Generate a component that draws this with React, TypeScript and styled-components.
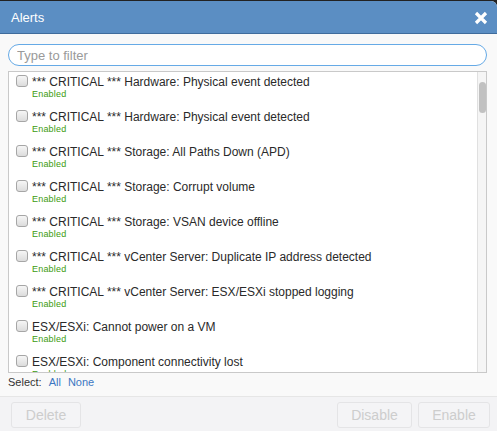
import React from "react";
import styled, { createGlobalStyle } from "styled-components";

const Global = createGlobalStyle`
  html, body { margin: 0; padding: 0; background: #222; }
  body { font-family: Arial, "Liberation Sans", sans-serif; width: 497px; height: 431px; overflow: hidden; }
  * { box-sizing: border-box; }
`;

const Dialog = styled.div`
  margin-top: 1px;
  width: 497px;
  height: 430px;
  display: flex;
  flex-direction: column;
  background: #f9f9f9;
  border-top-right-radius: 6px;
  overflow: hidden;
`;

const Header = styled.div`
  height: 33px;
  flex: none;
  display: flex;
  align-items: center;
  justify-content: space-between;
  padding: 0 8px 0 11px;
  background: #5b8ec3;
  border-bottom: 1px solid #3f6c9c;
  color: #fff;
`;

const Title = styled.div`
  font-size: 13px;
  line-height: 16px;
  padding-top: 1px;
`;

const Close = styled.div`
  width: 16px;
  height: 16px;
  display: flex;
  align-items: center;
  justify-content: center;
  margin-top: 1px;
`;

const Body = styled.div`
  flex: none;
  padding: 10px 10px 0 8px;
  display: flex;
  flex-direction: column;
`;

const Filter = styled.input`
  height: 22px;
  width: 479px;
  border: 1px solid #66aae6;
  border-radius: 11px;
  background: #fff;
  padding: 0 0 0 8px;
  font-family: Arial, "Liberation Sans", sans-serif;
  font-size: 13px;
  color: #333;
  outline: none;
  &::placeholder { color: #9a9a9a; }
`;

const List = styled.div`
  position: relative;
  margin-top: 5px;
  width: 479px;
  height: 302px;
  border: 1px solid #c9c9c9;
  background: #fff;
  overflow: hidden;
`;

const Scrollbar = styled.div`
  position: absolute;
  top: 0;
  right: 0;
  bottom: 0;
  width: 9px;
  background: #f5f5f5;
  border-left: 1px solid #e0e0e0;
  padding: 10px 0 0 1px;
`;

const Thumb = styled.div`
  width: 7px;
  height: 31px;
  border-radius: 4px;
  background: #c1c1c1;
`;

const Row = styled.label`
  display: flex;
  align-items: flex-start;
  height: 35px;
  padding: 3px 0 0 7px;
  overflow: hidden;
`;

const Check = styled.input`
  appearance: none;
  -webkit-appearance: none;
  width: 12px;
  height: 12px;
  margin: 0 4px 0 0;
  flex: none;
  border: 1px solid #a6a6a6;
  border-radius: 3px;
  background: linear-gradient(#f6f6f6, #dcdcdc);
`;

const Texts = styled.div`
  display: flex;
  flex-direction: column;
  padding-top: 1px;
`;

const Name = styled.div`
  font-size: 12px;
  line-height: 13px;
  color: #2a2a2a;
  white-space: nowrap;
`;

const Status = styled.div`
  font-size: 9px;
  line-height: 10px;
  letter-spacing: 0.2px;
  color: #3c9b0c;
`;

const SelectBar = styled.div`
  height: 23px;
  display: flex;
  align-items: center;
  gap: 7px;
  font-size: 11px;
  color: #333;
  padding-bottom: 5px;
`;

const Link = styled.span`
  color: #3b77c2;
`;

const Footer = styled.div`
  flex: 1;
  border-top: 1px solid #e6e6e6;
  background: #f3f3f5;
  display: flex;
  align-items: flex-start;
  padding: 5px 7px 0 11px;
  gap: 6px;
`;

const Button = styled.button<{ $w: number }>`
  width: ${p => p.$w}px;
  height: 26px;
  border: 1px solid #e4e4e6;
  border-radius: 3px;
  background: #f4f4f6;
  color: #cdcdcd;
  font-family: Arial, "Liberation Sans", sans-serif;
  font-size: 14px;
  padding: 0;
`;

const Spacer = styled.div`
  flex: 1;
`;

const alerts = [
  "*** CRITICAL *** Hardware: Physical event detected",
  "*** CRITICAL *** Hardware: Physical event detected",
  "*** CRITICAL *** Storage: All Paths Down (APD)",
  "*** CRITICAL *** Storage: Corrupt volume",
  "*** CRITICAL *** Storage: VSAN device offline",
  "*** CRITICAL *** vCenter Server: Duplicate IP address detected",
  "*** CRITICAL *** vCenter Server: ESX/ESXi stopped logging",
  "ESX/ESXi: Cannot power on a VM",
  "ESX/ESXi: Component connectivity lost",
];

export default function App() {
  return (
    <>
      <Global />
      <Dialog>
        <Header>
          <Title>Alerts</Title>
          <Close>
            <svg width="14" height="14" viewBox="0 0 14 14">
              <path d="M2 2 L12 12 M12 2 L2 12" stroke="#fff" strokeWidth="3.2" strokeLinecap="butt" />
            </svg>
          </Close>
        </Header>
        <Body>
          <Filter placeholder="Type to filter" autoFocus />
          <List>
            {alerts.map((name, i) => (
              <Row key={i}>
                <Check type="checkbox" />
                <Texts>
                  <Name>{name}</Name>
                  <Status>Enabled</Status>
                </Texts>
              </Row>
            ))}
            <Scrollbar>
              <Thumb />
            </Scrollbar>
          </List>
          <SelectBar>
            <span>Select:</span>
            <Link>All</Link>
            <Link>None</Link>
          </SelectBar>
        </Body>
        <Footer>
          <Button $w={70} disabled>Delete</Button>
          <Spacer />
          <Button $w={75} disabled>Disable</Button>
          <Button $w={72} disabled>Enable</Button>
        </Footer>
      </Dialog>
    </>
  );
}
